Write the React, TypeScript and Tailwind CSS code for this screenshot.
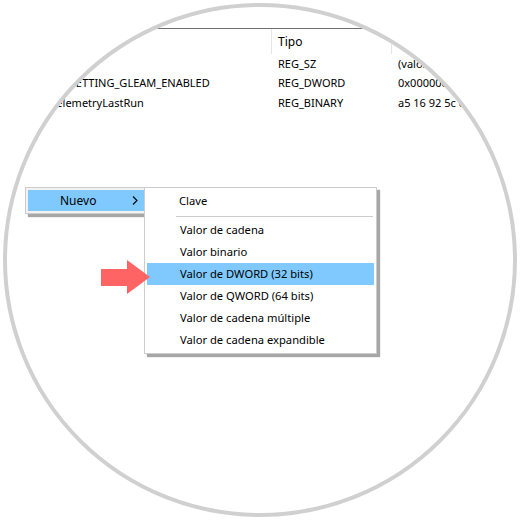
import React from "react";

const rows = [
  { name: "", pl: "pl-[51px]", type: "REG_SZ", data: "(valor no establecido)" },
  { name: "NOC_SETTING_GLEAM_ENABLED", pl: "pl-[41px]", type: "REG_DWORD", data: "0x00000001 (1)" },
  { name: "TelemetryLastRun", pl: "pl-[51px]", type: "REG_BINARY", data: "a5 16 92 5c d9 00 00 00" },
];

const items = [
  "Valor de cadena",
  "Valor binario",
  "Valor de DWORD (32 bits)",
  "Valor de QWORD (64 bits)",
  "Valor de cadena múltiple",
  "Valor de cadena expandible",
];

export default function App() {
  return (
    <div
      className="w-[520px] h-[520px] bg-white p-[3px] text-[11px] text-black"
      style={{ fontFamily: '"Noto Sans", "Open Sans", sans-serif' }}
    >
      <div className="w-[514px] h-[514px] rounded-full border-4 border-[#d0d0d0] overflow-hidden bg-white">
        <div className="relative -ml-[7px] -mt-[7px] w-[520px] h-[520px]">
          {/* list view */}
          <div className="pt-[28px]">
            <div className="border-t border-[#707070]">
              <div className="flex h-[25px] items-center">
                <div className="w-[272px] shrink-0 h-full border-r border-[#e5e5e5]" />
                <div className="w-[120px] shrink-0 h-full border-r border-[#e5e5e5] pl-[6px] flex items-center text-[12px]">Tipo</div>
                <div className="flex-1 min-w-0 pl-[6px] whitespace-nowrap overflow-hidden">Datos</div>
              </div>
              {rows.map((r, i) => (
                <div key={i} className="flex h-[19.5px] items-center whitespace-nowrap">
                  <div className={`w-[272px] shrink-0 ${r.pl} overflow-hidden`}>{r.name}</div>
                  <div className="w-[120px] shrink-0 pl-[6px]">{r.type}</div>
                  <div className="flex-1 min-w-0 pl-[6px] overflow-hidden">{r.data}</div>
                </div>
              ))}
            </div>
          </div>

          {/* Nuevo menu */}
          <div className="absolute left-[25px] top-[187px] w-[130px] h-[27px] border border-[#cccccc] bg-[#f2f2f2] p-[2px] shadow-[3px_3px_1px_rgba(0,0,0,0.35)]">
            <div className="h-full bg-[#80c9fe] flex items-center text-[12px]">
              <span className="ml-[32px]">Nuevo</span>
              <span className="ml-auto mr-[14px] flex">
                <svg width="6" height="9" viewBox="0 0 6 9">
                  <path d="M1 0.5 L5 4.5 L1 8.5" fill="none" stroke="#000" strokeWidth="1.1" />
                </svg>
              </span>
            </div>
          </div>

          {/* submenu */}
          <div className="absolute left-[144px] top-[187px] w-[233px] h-[167px] border border-[#cccccc] bg-white p-[1px] pr-[2px] shadow-[3px_3px_1px_rgba(0,0,0,0.35)] text-[11.2px]">
            <div className="h-[24px] pl-[33px] flex items-center">Clave</div>
            <div className="h-[6px] flex items-center">
              <div className="ml-[30px] mr-[1px] flex-1 h-px bg-[#cccccc]" />
            </div>
            {items.map((t, i) => (
              <div
                key={t}
                className={`h-[22px] pl-[33px] flex items-center ml-[1px] ${i === 2 ? "bg-[#80c9fe]" : ""}`}
              >
                {t}
              </div>
            ))}
          </div>

          {/* arrow */}
          <svg className="absolute left-[101px] top-[260px]" width="50" height="35" viewBox="0 0 50 35">
            <polygon points="0,9 26,9 26,0 49,17 26,34 26,26 0,26" fill="#ff6464" />
          </svg>
        </div>
      </div>
    </div>
  );
}
